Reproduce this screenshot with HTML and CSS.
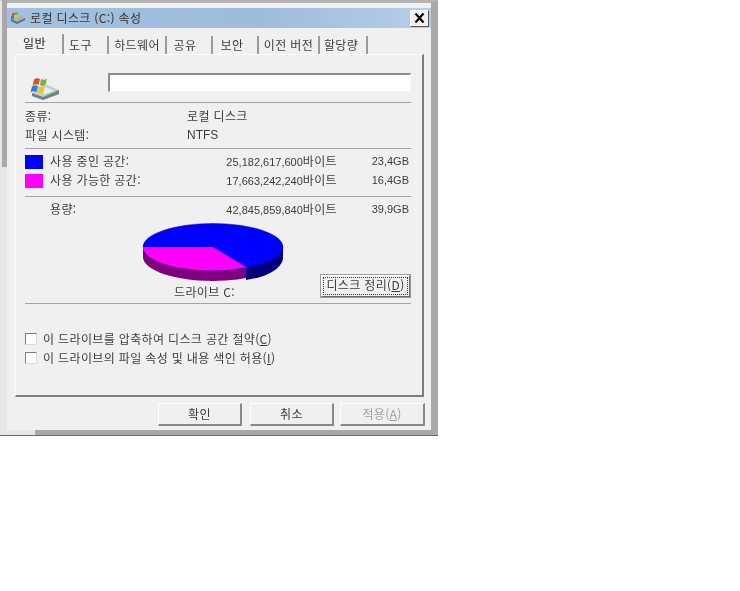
FILE: index.html
```html
<!DOCTYPE html>
<html lang="ko">
<head>
<meta charset="utf-8">
<title>로컬 디스크 (C:) 속성</title>
<link rel="stylesheet" href="styles.css">
</head>
<body>
<div class="window">
  <div class="titlebar">
    <svg class="title-icon" width="16" height="14" viewBox="0 0 16 14">
      <path d="M1 8l9-4 5 3v2l-8 4-6-3z" fill="#a8b4b4"/>
      <path d="M1 8l6 3 8-4v2l-8 4-6-3z" fill="#5f7070"/>
      <rect x="2" y="2" width="3" height="3" fill="#d8562e"/>
      <rect x="5" y="1" width="3" height="3" fill="#7ab648"/>
      <rect x="1" y="5" width="3" height="3" fill="#3a80d0"/>
      <rect x="4" y="4" width="3" height="3" fill="#f0c030"/>
    </svg>
    <span class="title-text">로컬 디스크 (C:) 속성</span>
    <span class="close-btn">
      <svg width="11" height="10" viewBox="0 0 11 10"><path d="M1.500 0.500l8 9M9.500 0.500l-8 9" stroke="#000" stroke-width="2.200" fill="none"/></svg>
    </span>
  </div>
  <div class="tabs">
    <span class="tab tab-1">일반</span>
    <span class="tab tab-2">도구</span>
    <span class="tab tab-3">하드웨어</span>
    <span class="tab tab-4">공유</span>
    <span class="tab tab-5">보안</span>
    <span class="tab tab-6">이전 버전</span>
    <span class="tab tab-7">할당량</span>
  </div>
  <div class="panel">
    <div class="name-row">
      <svg class="drive-icon" width="32" height="24" viewBox="0 0 32 24">
        <path d="M6 13L17 8l14 6v4L15 24 4 20z" fill="#c3ced0"/>
        <path d="M4 17l11 4 16-7v4L15 24 4 20z" fill="#6d8388"/>
        <path d="M17 11l9 3.500-9 3.500-6-3z" fill="#e8eeee"/>
        <rect x="22" y="18" width="4" height="2" fill="#3fa535"/>
        <path d="M6 3.500C8 2 10 2 12 3l-1.500 6C8 8 6.500 8 4.500 9.500z" fill="#d9532a"/>
        <path d="M13 3c2 1 4 1 6-.5l-1.500 6c-2 1.500-4 1.500-5.500.5z" fill="#76b043"/>
        <path d="M4 10.500c2-1.500 4-1.500 6-.5l-1.500 6c-2-1-4-1-6 .5z" fill="#2f7fd3"/>
        <path d="M11 10.500c2 1 4 1 6-.5l-1.500 6c-2 1.500-4 1.500-6 .5z" fill="#f2c22e"/>
      </svg>
      <div class="name-input"></div>
    </div>
    <div class="sep"></div>
    <div class="info-row info-first"><span class="info-label">종류:</span><span>로컬 디스크</span></div>
    <div class="info-row info-second"><span class="info-label">파일 시스템:</span><span class="ntfs">NTFS</span></div>
    <div class="sep sep-a"></div>
    <div class="space-row space-first">
      <span class="swatch swatch-used"></span><span class="space-label">사용 중인 공간:</span>
      <span class="bytes">25,182,617,600<span class="unit">바이트</span></span><span class="gb">23,4GB</span>
    </div>
    <div class="space-row space-second">
      <span class="swatch swatch-free"></span><span class="space-label">사용 가능한 공간:</span>
      <span class="bytes">17,663,242,240<span class="unit">바이트</span></span><span class="gb">16,4GB</span>
    </div>
    <div class="sep sep-b"></div>
    <div class="space-row space-total">
      <span class="swatch"></span><span class="space-label">용량:</span>
      <span class="bytes">42,845,859,840<span class="unit">바이트</span></span><span class="gb">39,9GB</span>
    </div>
    <div class="pie-area">
      <div class="pie-col">
        <svg class="pie" width="142" height="60" viewBox="0 0 142 60">
          <path d="M1 24v10c0 13 31 24 70 24s70-11 70-24V24z" fill="#7f007f"/>
          <path d="M104 46v11c22-3 37-12 37-23V24z" fill="#00007f"/>
          <ellipse cx="71" cy="24" rx="70" ry="23.500" fill="#0000ff" stroke="#00007f" stroke-width="0.500"/>
          <path d="M71 24H1c0 13 31 23.500 70 23.500 12 0 23-1 33-3.500z" fill="#ff00ff"/>
        </svg>
        <div class="drive-label">드라이브 C:</div>
      </div>
      <div class="cleanup-btn"><span class="cleanup-inner">디스크 정리(<u>D</u>)</span></div>
    </div>
    <div class="sep sep-c"></div>
    <label class="check-row check-first"><span class="checkbox"></span>이 드라이브를 압축하여 디스크 공간 절약(<u>C</u>)</label>
    <label class="check-row check-second"><span class="checkbox"></span>이 드라이브의 파일 속성 및 내용 색인 허용(<u>I</u>)</label>
  </div>
  <div class="actions">
    <span class="btn btn-ok">확인</span>
    <span class="btn btn-cancel">취소</span>
    <span class="btn btn-apply">적용(<u>A</u>)</span>
  </div>
  <div class="left-strip"></div>
  <div class="bottom-strip"></div>
</div>
</body>
</html>
```

FILE: styles.css
```css
* { box-sizing: border-box; }
html, body { margin: 0; padding: 0; background: #fff; }
body {
  font-family: "Noto Sans CJK KR", "Liberation Sans", sans-serif;
  font-size: 12px;
  letter-spacing: 0.350px;
  line-height: 16px;
  color: #3c3c3c;
  width: 740px;
  height: 591px;
  overflow: hidden;
}
.window {
  position: relative;
  width: 438px;
  height: 436px;
  background: #f0f0f0;
  border-top: 3px solid #b4b4b4;
  border-right: 7px solid #a8a8a8;
  border-bottom: 6px solid #e6e6e6;
  border-left: 7px solid #e6e6e6;
  display: flex;
  flex-direction: column;
  filter: blur(0.400px);
}
.left-strip {
  position: absolute;
  left: -5px;
  top: -3px;
  width: 5px;
  height: 167px;
  background: #a8a8a8;
}
.bottom-strip {
  position: absolute;
  left: -7px;
  right: -7px;
  bottom: -6px;
  height: 6px;
  background: linear-gradient(90deg, #e6e6e6 35px, #a8a8a8 35px);
  border-bottom: 1px solid #6a6a6a;
}
.titlebar {
  margin-top: 5px;
  height: 20px;
  flex: none;
  display: flex;
  align-items: center;
  background: linear-gradient(90deg, #a3c0de, #9dbbdb 60%, #b6cfe8);
  padding-left: 3px;
}
.title-icon { flex: none; margin-right: 4px; }
.title-text { flex: 1; color: #333; }
.close-btn {
  width: 19px;
  height: 17px;
  margin-right: 2px;
  background: #f0f0f0;
  border: 1px solid;
  border-color: #fff #555 #555 #fff;
  display: flex;
  align-items: center;
  justify-content: center;
}
.tabs {
  flex: none;
  height: 26px;
  display: flex;
  margin-left: 8px;
  padding-top: 8px;
}
.tab {
  display: block;
  height: 18px;
  border-right: 2px solid #9a9a9a;
  text-align: center;
  line-height: 17px;
  white-space: nowrap;
}
.tab-1 { width: 49px; padding-right: 8px; height: 20px; margin-top: -2px; color: #222; }
.tab-2 { width: 45px; padding-right: 10px; }
.tab-3 { width: 58px; }
.tab-4 { width: 46px; padding-right: 8px; }
.tab-5 { width: 46px; padding-right: 6px; }
.tab-6 { width: 61px; }
.tab-7 { width: 48px; padding-right: 4px; }
.panel {
  flex: none;
  width: 409px;
  height: 343px;
  margin-left: 8px;
  padding: 0 11px 0 9px;
  border-top: 1px solid #fbfbfb;
  border-left: 1px solid #fbfbfb;
  border-right: 2px solid #7d7d7d;
  border-bottom: 2px solid #7d7d7d;
  display: flex;
  flex-direction: column;
}
.name-row {
  height: 47px;
  flex: none;
  display: flex;
  align-items: flex-start;
  padding-top: 17px;
}
.drive-icon { flex: none; margin: 4px 0 0 3px; }
.name-input {
  width: 303px;
  height: 19px;
  margin-left: 48px;
  margin-top: 1px;
  background: #fff;
  border: 1px solid;
  border-color: #8e8e8e #f5f5f5 #f5f5f5 #8e8e8e;
  border-top-width: 2px;
  border-left-width: 2px;
}
.sep { height: 1px; background: #a3a3a3; flex: none; width: 386px; }
.info-row { display: flex; height: 16px; flex: none; }
.info-first { margin-top: 5px; }
.info-second { margin-top: 3px; }
.info-label { width: 162px; flex: none; }
.ntfs { font-family: "Liberation Sans", sans-serif; letter-spacing: 0; }
.sep-a { margin-top: 5px; }
.space-row { display: flex; height: 16px; flex: none; align-items: center; }
.space-first { margin-top: 5px; }
.space-second { margin-top: 3px; }
.space-total { margin-top: 5px; }
.sep-b { margin-top: 7px; }
.swatch { width: 18px; height: 14px; flex: none; margin-right: 7px; }
.swatch-used { background: #0000ff; }
.swatch-free { background: #ff00ff; }
.space-label { width: 170px; flex: none; margin-bottom: 2px; white-space: nowrap; }
.bytes { width: 117px; flex: none; text-align: right; font-family: "Liberation Sans", sans-serif; font-size: 11px; letter-spacing: 0; margin-bottom: 2px; white-space: nowrap; }
.unit { font-family: "Noto Sans CJK KR", sans-serif; font-size: 12px; letter-spacing: 0.350px; }
.gb { width: 72px; flex: none; text-align: right; font-family: "Liberation Sans", sans-serif; font-size: 11px; letter-spacing: 0; margin-bottom: 2px; }
.pie-area { height: 85px; flex: none; display: flex; }
.pie-col { width: 295px; flex: none; display: flex; flex-direction: column; padding-top: 5px; }
.pie { flex: none; margin-left: 117px; display: block; }
.drive-label { margin-left: 149px; margin-top: 1px; white-space: nowrap; }
.cleanup-btn {
  flex: none;
  width: 91px;
  height: 24px;
  margin-top: 56px;
  background: #f0f0f0;
  border: 2px solid;
  border-color: #fff #6d6d6d #6d6d6d #fff;
  outline: 1px solid #9a9a9a;
  outline-offset: -1px;
  padding: 1px;
  display: flex;
}
.cleanup-inner {
  flex: 1;
  border: 1px dotted #333;
  text-align: center;
  line-height: 14px;
  white-space: nowrap;
}
.check-row { display: flex; align-items: center; height: 16px; flex: none; white-space: nowrap; }
.check-first { margin-top: 27px; }
.check-second { margin-top: 3px; }
.checkbox {
  width: 12px;
  height: 12px;
  flex: none;
  margin-right: 6px;
  background: #fff;
  border: 1px solid;
  border-color: #7e7e7e #ddd #ddd #7e7e7e;
}
.actions { flex: none; display: flex; padding-left: 151px; padding-top: 6px; }
.btn {
  display: block;
  flex: none;
  height: 23px;
  background: #f0f0f0;
  border: 1px solid;
  border-color: #fff #888 #888 #fff;
  border-right-width: 2px;
  border-bottom-width: 2px;
  text-align: center;
  line-height: 20px;
}
.btn-ok { width: 84px; }
.btn-cancel { width: 84px; margin-left: 8px; }
.btn-apply { width: 85px; margin-left: 6px; color: #a0a0a0; }
```
